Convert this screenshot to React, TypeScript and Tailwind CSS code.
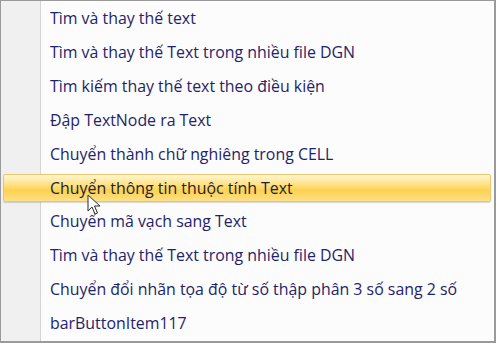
import React from "react";

const items = [
  "Tìm và thay thế text",
  "Tìm và thay thế Text trong nhiều file DGN",
  "Tìm kiếm thay thế text theo điều kiện",
  "Đập TextNode ra Text",
  "Chuyển thành chữ nghiêng trong CELL",
  "Chuyển thông tin thuộc tính Text",
  "Chuyển mã vạch sang Text",
  "Tìm và thay thế Text trong nhiều file DGN",
  "Chuyển đổi nhãn tọa độ từ số thập phân 3 số sang 2 số",
  "barButtonItem117",
];

export default function App() {
  return (
    <div className="w-[496px] h-[343px] bg-white overflow-hidden">
      <div
        className="relative w-[496px] h-[343px] border border-[#9a9a9a] border-r-2 border-b-2 bg-[#fcfcfc] flex"
        style={{ fontFamily: '"Open Sans", "Noto Sans", sans-serif' }}
      >
        <div className="absolute left-0 top-0 bottom-0 w-[40px] bg-[#f0f0f0] border-r border-[#d4d4d4]" />
        <div className="relative flex flex-col w-full pt-[1px]">
          {items.map((t, i) => {
            const hi = i === 5;
            return (
              <div key={i} className="h-[34px] flex items-center px-[2px]">
                <div
                  className={
                    "w-[488px] h-[28px] flex items-center pl-[46px] rounded-[2px] " +
                    (hi
                      ? "bg-[linear-gradient(to_bottom,#fff6cf_0%,#ffe38a_35%,#fcd24f_60%,#fde08a_100%)] border border-[#e8c772] shadow-[0_1px_1px_rgba(0,0,0,0.15)]"
                      : "border border-transparent")
                  }
                >
                  <span
                    className={
                      "text-[15.9px] leading-none tracking-[0px] " +
                      (hi ? "text-[#1e1e2e]" : "text-[#1f2369]")
                    }
                  >
                    {t}
                  </span>
                </div>
              </div>
            );
          })}
        </div>
        <svg
          className="absolute left-[86px] top-[193px]"
          width="14"
          height="22"
          viewBox="0 0 14 22"
        >
          <path
            d="M1 1 L1 17 L5 13 L8 20 L10.5 19 L7.5 12 L13 12 Z"
            fill="#ffffff"
            stroke="#2a2a2a"
            strokeWidth="1"
            strokeLinejoin="round"
          />
        </svg>
      </div>
    </div>
  );
}
